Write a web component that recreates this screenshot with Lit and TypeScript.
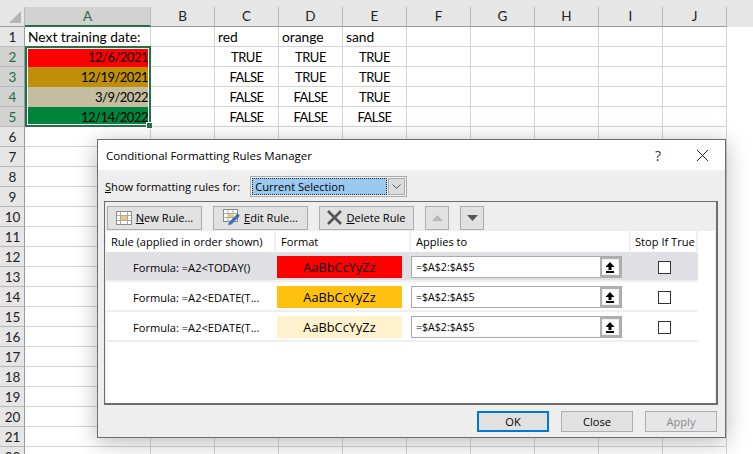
import { LitElement, html, css, svg } from "lit";
import { customElement } from "lit/decorators.js";

const cols = ["A", "B", "C", "D", "E", "F", "G", "H", "I", "J"];
const widths = [125, 64, 64, 64, 64, 64, 64, 64, 64, 64];
const dates = [
  ["12/6/2021", "#ff0000"],
  ["12/19/2021", "#bf8f0a"],
  ["3/9/2022", "#c4bd9f"],
  ["12/14/2022", "#00843d"],
];
const bools = [
  ["TRUE", "TRUE", "TRUE"],
  ["FALSE", "TRUE", "TRUE"],
  ["FALSE", "FALSE", "TRUE"],
  ["FALSE", "FALSE", "FALSE"],
];
const rules = [
  ["Formula: =A2<TODAY()", "#ff0000", true],
  ["Formula: =A2<EDATE(T...", "#ffc010", false],
  ["Formula: =A2<EDATE(T...", "#fff2cd", false],
] as const;

const upArrow = svg`<svg width="10" height="11" viewBox="0 0 10 11"><path d="M5 0 L9.5 5 H6.5 V8 H3.5 V5 H0.5 Z" fill="#000"/><rect x="1" y="9" width="8" height="2" fill="#000"/></svg>`;

const newIcon = svg`<svg width="16" height="14" viewBox="0 0 16 14"><rect x="0.5" y="0.5" width="15" height="13" fill="#fff" stroke="#8a8a8a"/><path d="M0.5 4.5H15.5M0.5 9.5H15.5M4.5 0.5V13.5M11.5 0.5V13.5" stroke="#a8a8a8"/><rect x="5" y="5" width="6" height="4" fill="#f3c77a"/></svg>`;
const editIcon = svg`<svg width="17" height="17" viewBox="0 0 17 17"><rect x="0.5" y="0.5" width="14" height="12" fill="#fff" stroke="#8a8a8a"/><path d="M0.5 4.5H14.5M0.5 8.5H14.5M5 0.5V12.5M10 0.5V12.5" stroke="#a8a8a8"/><rect x="5" y="5" width="5" height="3" fill="#f3c77a"/><path d="M5 16 L6 13 L13 6 L15.5 8.5 L8.5 15.5 Z" fill="#3f74b8"/><path d="M13 6 L14.5 4.5 L16.5 6.5 L15.5 8.5 Z" fill="#2a5a9a"/></svg>`;
const delIcon = svg`<svg width="15" height="15" viewBox="0 0 15 15"><path d="M1 1 L14 14 M14 1 L1 14" stroke="#555" stroke-width="2.6"/></svg>`;

@customElement("app-root")
export class AppRoot extends LitElement {
  static styles = css`
    :host { display: block; width: 753px; height: 454px; overflow: hidden; position: relative; background: #fff; }
    .sheet { display: flex; flex-direction: column; font-family: Lato, sans-serif; font-size: 13.8px; color: #000; padding-top: 7px; background: #e6e6e6; height: 447px; box-sizing: border-box; }
    .head { display: flex; height: 20px; flex: none; }
    .corner { width: 25px; flex: none; position: relative; border-right: 1px solid #b8b8b8; box-sizing: border-box; border-bottom: 1px solid #9a9a9a; }
    .tri { position: absolute; right: 3px; bottom: 3px; width: 0; height: 0; border-style: solid; border-width: 0 0 12px 12px; border-color: transparent transparent #b4b4b4 transparent; }
    .ch { flex: none; box-sizing: border-box; text-align: center; line-height: 19px; border-right: 1px solid #b8b8b8; border-bottom: 1px solid #9a9a9a; color: #222; font-size: 13.5px; }
    .ch.sel { background: #d2d2d2; color: #1f6b43; border-bottom: 2px solid #217346; }
    .row { display: flex; height: 20px; flex: none; background: #fff; }
    .rh { width: 25px; flex: none; box-sizing: border-box; background: #e6e6e6; border-right: 1px solid #9a9a9a; border-bottom: 1px solid #b8b8b8; text-align: center; line-height: 20px; font-size: 13.5px; color: #222; padding-left: 1px; }
    .rh.sel { background: #d2d2d2; color: #1f6b43; }
    .c { flex: none; box-sizing: border-box; border-right: 1px solid #d4d4d4; border-bottom: 1px solid #d4d4d4; line-height: 20px; padding: 0 3px; white-space: nowrap; }
    .c.r { text-align: right; padding-right: 2px; font-size: 13px; letter-spacing: -0.5px; line-height: 21px; }
    .c.m { text-align: center; padding: 0; font-size: 13px; letter-spacing: -0.5px; line-height: 21px; }
    .c.fill { border-color: transparent; }
    .selbox { position: absolute; left: 25px; top: 46px; width: 126px; height: 81px; box-sizing: border-box; border: 2px solid #217346; box-shadow: inset 0 0 0 1px #fff; pointer-events: none; }
    .handle { position: absolute; right: -4px; bottom: -4px; width: 5px; height: 5px; background: #217346; border: 1px solid #fff; }

    .dlg { position: absolute; left: 97px; top: 139px; width: 629px; height: 299px; box-sizing: border-box; border: 1px solid #6c6c6c; background: #eeeeee; display: flex; flex-direction: column; font-family: "Open Sans", sans-serif; font-size: 11.1px; color: #000; box-shadow: 0 4px 22px rgba(0,0,0,.28); }
    .title { height: 30px; flex: none; background: #fff; display: flex; align-items: center; padding-left: 8px; padding-right: 16px; font-size: 11.5px; }
    .title .t { flex: 1; }
    .title .q { font-size: 14px; margin-right: 35px; color: #333; }
    .show { height: 31px; flex: none; display: flex; align-items: center; padding-left: 7px; gap: 10px; box-sizing: border-box; padding-top: 2px; }
    u { text-decoration: underline; text-underline-offset: 1px; }
    .combo { width: 157px; height: 21px; box-sizing: border-box; border: 1px solid #ababab; padding: 1px; display: flex; background: #f4f4f4; }
    .combo .v { flex: 1; background: #99c9ef; outline: 1px dotted #222; outline-offset: -1px; padding-left: 3px; line-height: 17px; }
    .combo .b { width: 17px; background: #dcdcdc; border: 1px solid #ababab; box-sizing: border-box; display: flex; align-items: center; justify-content: center; margin-left: 1px; }
    .panel { margin: 0 7px 0 6px; height: 204px; flex: none; box-sizing: border-box; border: 1px solid #6d6d6d; border-right-width: 2px; border-bottom-width: 2px; display: flex; flex-direction: column; }
    .bar { height: 29px; flex: none; display: flex; align-items: center; padding: 2px 0 0 2px; box-sizing: border-box; gap: 11px; }
    .tb { height: 24px; width: 95px; box-sizing: border-box; background: #e1e1e1; border: 1px solid #adadad; display: flex; align-items: center; justify-content: center; gap: 4px; flex: none; white-space: nowrap; }
    .tb.sm { width: 24px; }
    .list { flex: 1; background: #fff; margin: 0 1px 0 1px; }
    .gridrow { display: grid; grid-template-columns: 170px 135px 220px 67px; align-items: center; width: 592px; }
    .hdr { height: 21px; box-sizing: border-box; }
    .hdr div { height: 100%; line-height: 22px; padding-left: 5px; box-sizing: border-box; border-right: 2px solid #f0f0f0; }
    .hdr div.e { padding-left: 4px; white-space: nowrap; }
    .rule { height: 30px; border-bottom: 2px solid #f0f0f0; box-sizing: border-box; padding-top: 2px; }
    .rule.active { background: #dfdfe4; }
    .rn { padding-left: 27px; white-space: nowrap; }
    .fmt { height: 22px; width: 125px; margin-left: 1px; text-align: center; line-height: 22px; font-size: 12.8px; }
    .rng { width: 211px; height: 22px; box-sizing: border-box; border: 1px solid #ababab; background: #fff; display: flex; }
    .rng .v { flex: 1; padding-left: 4px; line-height: 21px; font-size: 10.6px; }
    .rng .p { width: 21px; box-sizing: border-box; border: 2px solid #b0b0b0; display: flex; align-items: center; justify-content: center; background: #f0f0f0; padding-right: 1px; }
    .rng .p span { background: #fff; width: 15px; height: 14px; display: flex; align-items: center; justify-content: center; }
    .ck { justify-self: center; width: 13px; height: 13px; border: 1px solid #333; box-sizing: border-box; background: #fff; }
    .foot { flex: 1; display: flex; justify-content: flex-end; align-items: center; gap: 12px; padding-right: 8px; }
    .btn { width: 72px; height: 21px; box-sizing: border-box; background: #e1e1e1; border: 1px solid #adadad; text-align: center; line-height: 19px; }
    .btn.def { border: 2px solid #0078d7; line-height: 17px; }
    .btn.dis { color: #8a8a8a; background: #e6e6e6; }
  `;

  render() {
    const rows = Array.from({ length: 22 }, (_, i) => i + 1);
    return html`
      <div class="sheet">
        <div class="head">
          <div class="corner"><div class="tri"></div></div>
          ${cols.map((c, i) => html`<div class="ch ${i === 0 ? "sel" : ""}" style="width:${i === 0 ? 126 : widths[i]}px">${c}</div>`)}
        </div>
        ${rows.map((r) => html`
          <div class="row">
            <div class="rh ${r >= 2 && r <= 5 ? "sel" : ""}">${r}</div>
            ${cols.map((_, ci) => {
              const w = ci === 0 ? 126 : widths[ci];
              if (r === 1) {
                const t = ["Next training date:", "", "red", "orange", "sand"][ci] ?? "";
                return html`<div class="c" style="width:${w}px">${t}</div>`;
              }
              if (r >= 2 && r <= 5 && ci === 0) {
                const [d, bg] = dates[r - 2];
                return html`<div class="c r fill" style="width:${w}px;background:${bg}">${d}</div>`;
              }
              if (r >= 2 && r <= 5 && ci >= 2 && ci <= 4) {
                return html`<div class="c m" style="width:${w}px">${bools[r - 2][ci - 2]}</div>`;
              }
              return html`<div class="c" style="width:${w}px"></div>`;
            })}
          </div>`)}
      </div>
      <div class="selbox"><div class="handle"></div></div>

      <div class="dlg">
        <div class="title"><span class="t">Conditional Formatting Rules Manager</span><span class="q">?</span>
          <svg width="13" height="13" viewBox="0 0 13 13"><path d="M1 1 L12 12 M12 1 L1 12" stroke="#222" stroke-width="1"/></svg>
        </div>
        <div class="show">
          <span><u>S</u>how formatting rules for:</span>
          <div class="combo"><div class="v">Current Selection</div>
            <div class="b"><svg width="9" height="5" viewBox="0 0 9 5"><path d="M0.5 0.5 L4.5 4.5 L8.5 0.5" fill="none" stroke="#555"/></svg></div></div>
        </div>
        <div class="panel">
          <div class="bar">
            <div class="tb">${newIcon}<span><u>N</u>ew Rule...</span></div>
            <div class="tb">${editIcon}<span><u>E</u>dit Rule...</span></div>
            <div class="tb">${delIcon}<span><u>D</u>elete Rule</span></div>
            <div class="tb sm"><svg width="11" height="6" viewBox="0 0 11 6"><path d="M5.5 0 L11 6 H0 Z" fill="#b8b8b8"/></svg></div>
            <div class="tb sm"><svg width="11" height="6" viewBox="0 0 11 6"><path d="M0 0 H11 L5.5 6 Z" fill="#555"/></svg></div>
          </div>
          <div class="list">
            <div class="gridrow hdr">
              <div>Rule (applied in order shown)</div><div>Format</div><div>Applies to</div><div class="e">Stop If True</div>
            </div>
            ${rules.map(([n, c, a]) => html`
              <div class="gridrow rule ${a ? "active" : ""}">
                <div class="rn">${n}</div>
                <div class="fmt" style="background:${c}">AaBbCcYyZz</div>
                <div class="rng"><div class="v">=$A$2:$A$5</div><div class="p"><span>${upArrow}</span></div></div>
                <div class="ck"></div>
              </div>`)}
          </div>
        </div>
        <div class="foot">
          <div class="btn def">OK</div>
          <div class="btn">Close</div>
          <div class="btn dis">Apply</div>
        </div>
      </div>
    `;
  }
}
